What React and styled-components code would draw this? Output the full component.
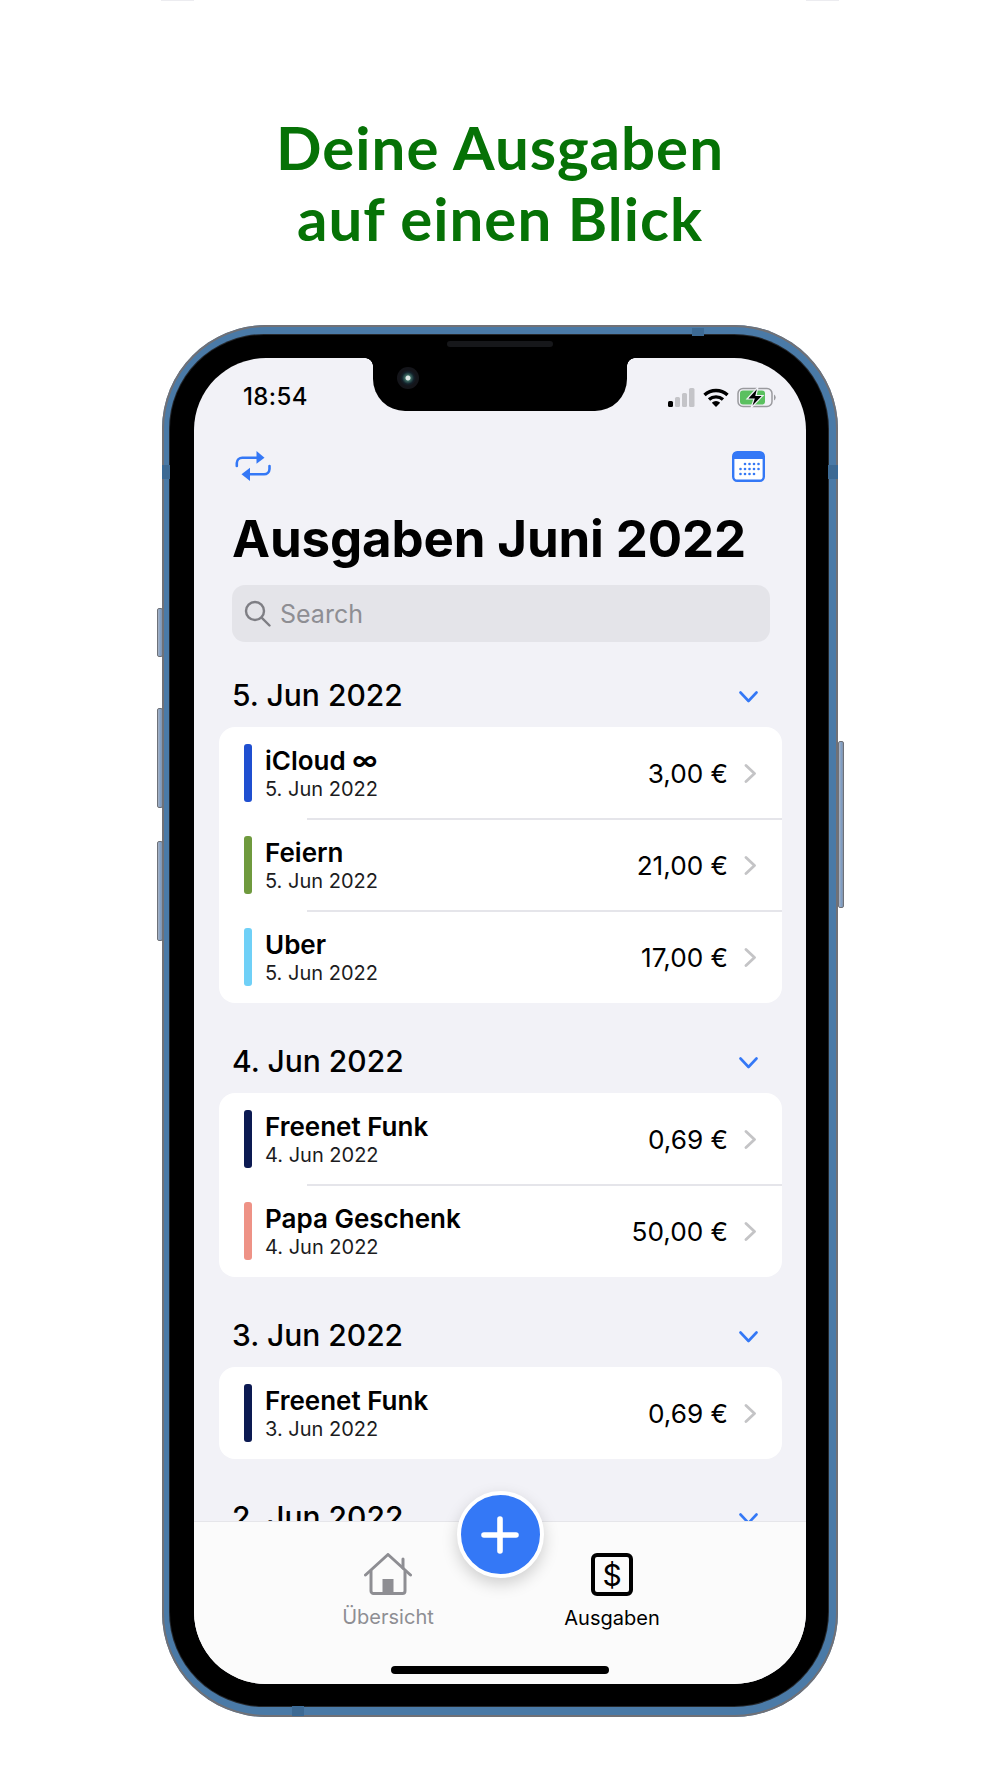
import styled, { createGlobalStyle } from "styled-components"

const GlobalStyle = createGlobalStyle`
  html, body {
    margin: 0;
    padding: 0;
    background: #ffffff;
  }
  * { box-sizing: border-box; }
`

const Page = styled.div`
  position: relative;
  width: 1000px;
  height: 1778px;
  padding-top: 112px;
  display: flex;
  flex-direction: column;
  align-items: center;
  overflow: hidden;
  background: #fff;
`

const EdgeMark = styled.span`
  position: absolute;
  top: 0;
  left: ${(p) => p.$left}px;
  width: 33px;
  height: 1px;
  background: #ececf0;
`

const Headline = styled.h1`
  margin: 0 0 71px;
  font-family: "Lato", sans-serif;
  font-weight: 700;
  font-size: 60px;
  line-height: 71px;
  letter-spacing: 1px;
  text-align: center;
  color: #067206;
`

const Frame = styled.div`
  position: relative;
  width: 676px;
  height: 1392px;
  padding: 10px 10px 11px 8px;
  border-radius: 104px;
  background: #4a7aa7;
  box-shadow: inset 0 0 0 2px #717176;
`

const Bezel = styled.div`
  width: 100%;
  height: 100%;
  padding: 23px 22px 22px 24px;
  border-radius: 94px;
  background: #000;
  box-shadow: 0 0 0 1px #24272b;
`

const Screen = styled.div`
  position: relative;
  height: 100%;
  display: flex;
  flex-direction: column;
  overflow: hidden;
  border-radius: 72px;
  background: #f2f2f7;
  font-family: "Inter", sans-serif;
  color: #000;
`

const SideButton = styled.span`
  position: absolute;
  top: ${(p) => p.$top}px;
  ${(p) => (p.$right ? "right: -6px;" : "left: -5px;")}
  width: 6px;
  height: ${(p) => p.$h}px;
  border-radius: 2px;
  border: 1px solid #6d7179;
  background: linear-gradient(90deg, #aab4c4, #7f9fc6 60%, #8a96a8);
`

const Band = styled.span`
  position: absolute;
  background: #3d6a94;
  ${(p) => p.$css}
`

const Speaker = styled.span`
  position: absolute;
  top: 16px;
  left: 285px;
  width: 106px;
  height: 6px;
  border-radius: 3px;
  background: #16171a;
`

const Notch = styled.div`
  position: absolute;
  top: 0;
  left: 179px;
  width: 254px;
  height: 53px;
  border-radius: 0 0 32px 32px;
  background: #000;

  &::before,
  &::after {
    content: "";
    position: absolute;
    top: 0;
    width: 8px;
    height: 8px;
  }
  &::before {
    left: -8px;
    background: radial-gradient(circle at 0 100%, transparent 7.5px, #000 8px);
  }
  &::after {
    right: -8px;
    background: radial-gradient(circle at 100% 100%, transparent 7.5px, #000 8px);
  }
`

const Camera = styled.span`
  position: absolute;
  top: 9px;
  left: 24px;
  width: 22px;
  height: 22px;
  border-radius: 50%;
  background: radial-gradient(circle at 50% 50%, #dfe8e6 0 2px, #3b6a62 3px, #12202a 6px, #14151a 8px);
`

const StatusBar = styled.div`
  height: 93px;
  flex: none;
  display: flex;
  align-items: flex-start;
  justify-content: space-between;
  padding: 27px 29px 0 49px;
`

const Time = styled.span`
  font-size: 24px;
  font-weight: 550;
  line-height: 24px;
  letter-spacing: 0.4px;
`

const StatusIcons = styled.div`
  display: flex;
  align-items: center;
  gap: 8px;
  padding-top: 2px;
`

const TopBar = styled.div`
  flex: none;
  display: flex;
  align-items: flex-start;
  justify-content: space-between;
  padding: 0 41px 0 41px;
`

const Content = styled.div`
  flex: 1;
  min-height: 0;
  overflow: hidden;
  padding: 0 24px 0 25px;
`

const Title = styled.h2`
  margin: 26px 0 15px 13px;
  font-size: 51px;
  font-weight: 700;
  line-height: 62px;
  letter-spacing: -0.15px;
`

const SearchBar = styled.div`
  height: 57px;
  margin: 0 12px 0 13px;
  padding: 0 12px;
  display: flex;
  align-items: center;
  gap: 9px;
  border-radius: 13px;
  background: #e4e4e9;
`

const SearchText = styled.span`
  font-size: 25px;
  color: #8e8e93;
`

const Sections = styled.div`
  margin-top: 37px;
  display: flex;
  flex-direction: column;
  gap: 42px;
`

const SectionHead = styled.div`
  height: 32px;
  margin-bottom: 16px;
  padding: 0 24px 0 13px;
  display: flex;
  align-items: center;
  justify-content: space-between;
`

const SectionTitle = styled.span`
  font-size: 30px;
  font-weight: 550;
  line-height: 32px;
`

const Card = styled.div`
  border-radius: 16px;
  background: #fff;
`

const Row = styled.div`
  position: relative;
  height: 92px;
  padding: 0 26px 0 25px;
  display: flex;
  align-items: center;

  &:not(:last-child)::after {
    content: "";
    position: absolute;
    left: 88px;
    right: 0;
    bottom: -1px;
    height: 2px;
    background: #e5e5ea;
  }
`

const ColorBar = styled.span`
  flex: none;
  width: 8px;
  height: 58px;
  margin-right: 13px;
  border-radius: 3px;
  background: ${(p) => p.$color};
`

const RowText = styled.div`
  flex: 1;
  padding-bottom: 2px;
  display: flex;
  flex-direction: column;
`

const RowTitle = styled.span`
  font-size: 26px;
  font-weight: 580;
  line-height: 33px;
`

const RowDate = styled.span`
  font-size: 20px;
  line-height: 24px;
  color: #1c1c1e;
`

const Amount = styled.span`
  margin-right: 16px;
  font-size: 26.2px;
  font-weight: 440;
`

const TabBar = styled.div`
  position: relative;
  flex: none;
  height: 163px;
  padding-top: 31px;
  display: flex;
  justify-content: center;
  gap: 74px;
  border-top: 1px solid #e6e6ea;
  background: #fbfbfb;
`

const Tab = styled.div`
  width: 150px;
  display: flex;
  flex-direction: column;
  align-items: center;
  gap: 10px;
  font-size: 20px;
  line-height: 24px;
  color: ${(p) => (p.$active ? "#000" : "#8e8e93")};
`

const DollarBox = styled.span`
  width: 42px;
  height: 43px;
  display: flex;
  align-items: center;
  justify-content: center;
  border: 4px solid #000;
  border-radius: 6px;
  font-size: 30px;
  line-height: 1;
`

const Fab = styled.button`
  position: absolute;
  top: -31px;
  left: 50%;
  width: 87px;
  height: 87px;
  margin-left: -43.5px;
  padding: 0;
  display: flex;
  align-items: center;
  justify-content: center;
  border: 4px solid #fff;
  border-radius: 50%;
  background: #3478f6;
  box-shadow: 0 6px 16px rgba(0, 0, 0, 0.18);
`

const HomeIndicator = styled.span`
  position: absolute;
  left: 197px;
  bottom: 10px;
  width: 218px;
  height: 8px;
  border-radius: 4px;
  background: #000;
`

const SignalIcon = () => (
  <svg width="27" height="19" viewBox="0 0 27 19">
    <rect x="0" y="13" width="5" height="6" rx="1.5" fill="#000" />
    <rect x="7" y="9" width="5" height="10" rx="1.5" fill="#c4c4c8" />
    <rect x="14" y="5" width="5" height="14" rx="1.5" fill="#c4c4c8" />
    <rect x="21" y="0" width="5.5" height="19" rx="1.5" fill="#c4c4c8" />
  </svg>
)

const WifiIcon = () => (
  <svg width="26" height="19" viewBox="0 0 26 19" fill="none" stroke="#000" strokeWidth="3.4">
    <path d="M1.5 7 A17 17 0 0 1 24.5 7" />
    <path d="M6 11.5 A10.5 10.5 0 0 1 20 11.5" />
    <path d="M13 19 L8.8 14.8 A6 6 0 0 1 17.2 14.8 Z" fill="#000" stroke="none" />
  </svg>
)

const BatteryIcon = () => (
  <svg width="40" height="21" viewBox="0 0 40 21">
    <rect x="1" y="1.5" width="34" height="18" rx="5" fill="none" stroke="#9a9a9e" strokeWidth="1.5" />
    <rect x="3" y="3.5" width="25" height="14" rx="3" fill="#5ac05f" />
    <path d="M37 7.5 a3.5 3.5 0 0 1 0 6 Z" fill="#9a9a9e" />
    <path d="M21 0 L10 12 H17 L14 21 L26 8.5 H19 Z" fill="#000" stroke="#f2f2f7" strokeWidth="1.2" />
  </svg>
)

const RepeatIcon = () => (
  <svg width="36" height="30" viewBox="0 0 36 30" fill="none" stroke="#3478f6" strokeWidth="2.6" strokeLinecap="round">
    <path d="M1.8 15 V12 a5.5 5.5 0 0 1 5.5-5.3 H24" />
    <path d="M21.5 0 L29.5 6.7 L21.5 12.8 Z" fill="#3478f6" stroke="none" />
    <path d="M34.5 15 V18 a5.5 5.5 0 0 1-5.5 5.3 H12" />
    <path d="M15 16.7 L6.5 23.3 L15 30 Z" fill="#3478f6" stroke="none" />
  </svg>
)

const calendarDots = [
  [13, 13], [17.5, 13], [22, 13], [26.5, 13],
  [8.5, 18], [13, 18], [17.5, 18], [22, 18], [26.5, 18],
  [8.5, 23], [13, 23], [17.5, 23], [22, 23],
]

const CalendarIcon = () => (
  <svg width="33" height="31" viewBox="0 0 33 31">
    <rect x="1.2" y="1.2" width="30.6" height="28.6" rx="4" fill="#fff" stroke="#3478f6" strokeWidth="2.4" />
    <path d="M1 8 V5 a4 4 0 0 1 4-4 H28 a4 4 0 0 1 4 4 V8 Z" fill="#3478f6" />
    {calendarDots.map(([cx, cy]) => (
      <circle key={`${cx}-${cy}`} cx={cx} cy={cy} r="1.3" fill="#3478f6" />
    ))}
  </svg>
)

const SearchIcon = () => (
  <svg width="27" height="27" viewBox="0 0 27 27" fill="none" stroke="#7e7e84" strokeWidth="2.4" strokeLinecap="round">
    <circle cx="11" cy="11" r="9" />
    <path d="M17.6 17.6 L25.5 25.5" />
  </svg>
)

const ChevronDown = () => (
  <svg width="19" height="16" viewBox="0 -4 19 16" fill="none" stroke="#3478f6" strokeWidth="2.6" strokeLinecap="round" strokeLinejoin="round">
    <path d="M1.5 1.5 L9.5 10 L17.5 1.5" />
  </svg>
)

const ChevronRight = () => (
  <svg width="12" height="19" viewBox="0 0 12 19" fill="none" stroke="#c4c4c6" strokeWidth="2.8" strokeLinecap="round" strokeLinejoin="round">
    <path d="M2 1.5 L10.5 9.5 L2 17.5" />
  </svg>
)

const HouseIcon = () => (
  <svg width="48" height="42" viewBox="0 0 48 42" fill="none" stroke="#8e8e93" strokeWidth="3" strokeLinejoin="round" strokeLinecap="round">
    <path d="M1.5 22 L24 1.5 L46.5 22" />
    <path d="M39 15 V6" />
    <path d="M7 18 V38 a2.5 2.5 0 0 0 2.5 2.5 H38.5 a2.5 2.5 0 0 0 2.5-2.5 V18" />
    <rect x="18.5" y="26" width="11" height="14" fill="#8e8e93" stroke="none" />
  </svg>
)

const PlusIcon = () => (
  <svg width="38" height="38" viewBox="0 0 38 38" stroke="#fff" strokeWidth="5.6" strokeLinecap="round">
    <path d="M19 3 V35 M3 19 H35" />
  </svg>
)

const sections = [
  {
    date: "5. Jun 2022",
    rows: [
      { name: "iCloud ∞", amount: "3,00 €", color: "#1f4fd0" },
      { name: "Feiern", amount: "21,00 €", color: "#6f9a3e" },
      { name: "Uber", amount: "17,00 €", color: "#6fd0f7" },
    ],
  },
  {
    date: "4. Jun 2022",
    rows: [
      { name: "Freenet Funk", amount: "0,69 €", color: "#0c1a52" },
      { name: "Papa Geschenk", amount: "50,00 €", color: "#ee9286" },
    ],
  },
  {
    date: "3. Jun 2022",
    rows: [{ name: "Freenet Funk", amount: "0,69 €", color: "#0c1a52" }],
  },
  { date: "2. Jun 2022", rows: [] },
]

export default function App() {
  return (
    <Page>
      <GlobalStyle />
      <EdgeMark $left={161} />
      <EdgeMark $left={806} />
      <Headline>
        Deine Ausgaben
        <br />
        auf einen Blick
      </Headline>

      <Frame>
        <SideButton $top={283} $h={49} />
        <SideButton $top={383} $h={100} />
        <SideButton $top={516} $h={100} />
        <SideButton $right $top={416} $h={167} />
        <Band $css="top: 3px; left: 530px; width: 12px; height: 8px;" />
        <Band $css="top: 140px; right: 0; width: 10px; height: 14px;" />
        <Band $css="top: 140px; left: 0; width: 8px; height: 14px;" />
        <Band $css="bottom: 1px; left: 130px; width: 12px; height: 10px;" />
        <Bezel>
          <Screen>
            <Notch>
              <Camera />
            </Notch>
            <StatusBar>
              <Time>18:54</Time>
              <StatusIcons>
                <SignalIcon />
                <WifiIcon />
                <BatteryIcon />
              </StatusIcons>
            </StatusBar>
            <TopBar>
              <RepeatIcon />
              <CalendarIcon />
            </TopBar>
            <Content>
              <Title>Ausgaben Juni 2022</Title>
              <SearchBar>
                <SearchIcon />
                <SearchText>Search</SearchText>
              </SearchBar>
              <Sections>
                {sections.map((section) => (
                  <div key={section.date}>
                    <SectionHead>
                      <SectionTitle>{section.date}</SectionTitle>
                      <ChevronDown />
                    </SectionHead>
                    <Card>
                      {section.rows.map((row) => (
                        <Row key={row.name}>
                          <ColorBar $color={row.color} />
                          <RowText>
                            <RowTitle>{row.name}</RowTitle>
                            <RowDate>{section.date}</RowDate>
                          </RowText>
                          <Amount>{row.amount}</Amount>
                          <ChevronRight />
                        </Row>
                      ))}
                    </Card>
                  </div>
                ))}
              </Sections>
            </Content>
            <TabBar>
              <Fab type="button" aria-label="Neue Ausgabe">
                <PlusIcon />
              </Fab>
              <Tab>
                <HouseIcon />
                Übersicht
              </Tab>
              <Tab $active>
                <DollarBox>$</DollarBox>
                Ausgaben
              </Tab>
              <HomeIndicator />
            </TabBar>
          </Screen>
        </Bezel>
        <Speaker />
      </Frame>
    </Page>
  )
}
